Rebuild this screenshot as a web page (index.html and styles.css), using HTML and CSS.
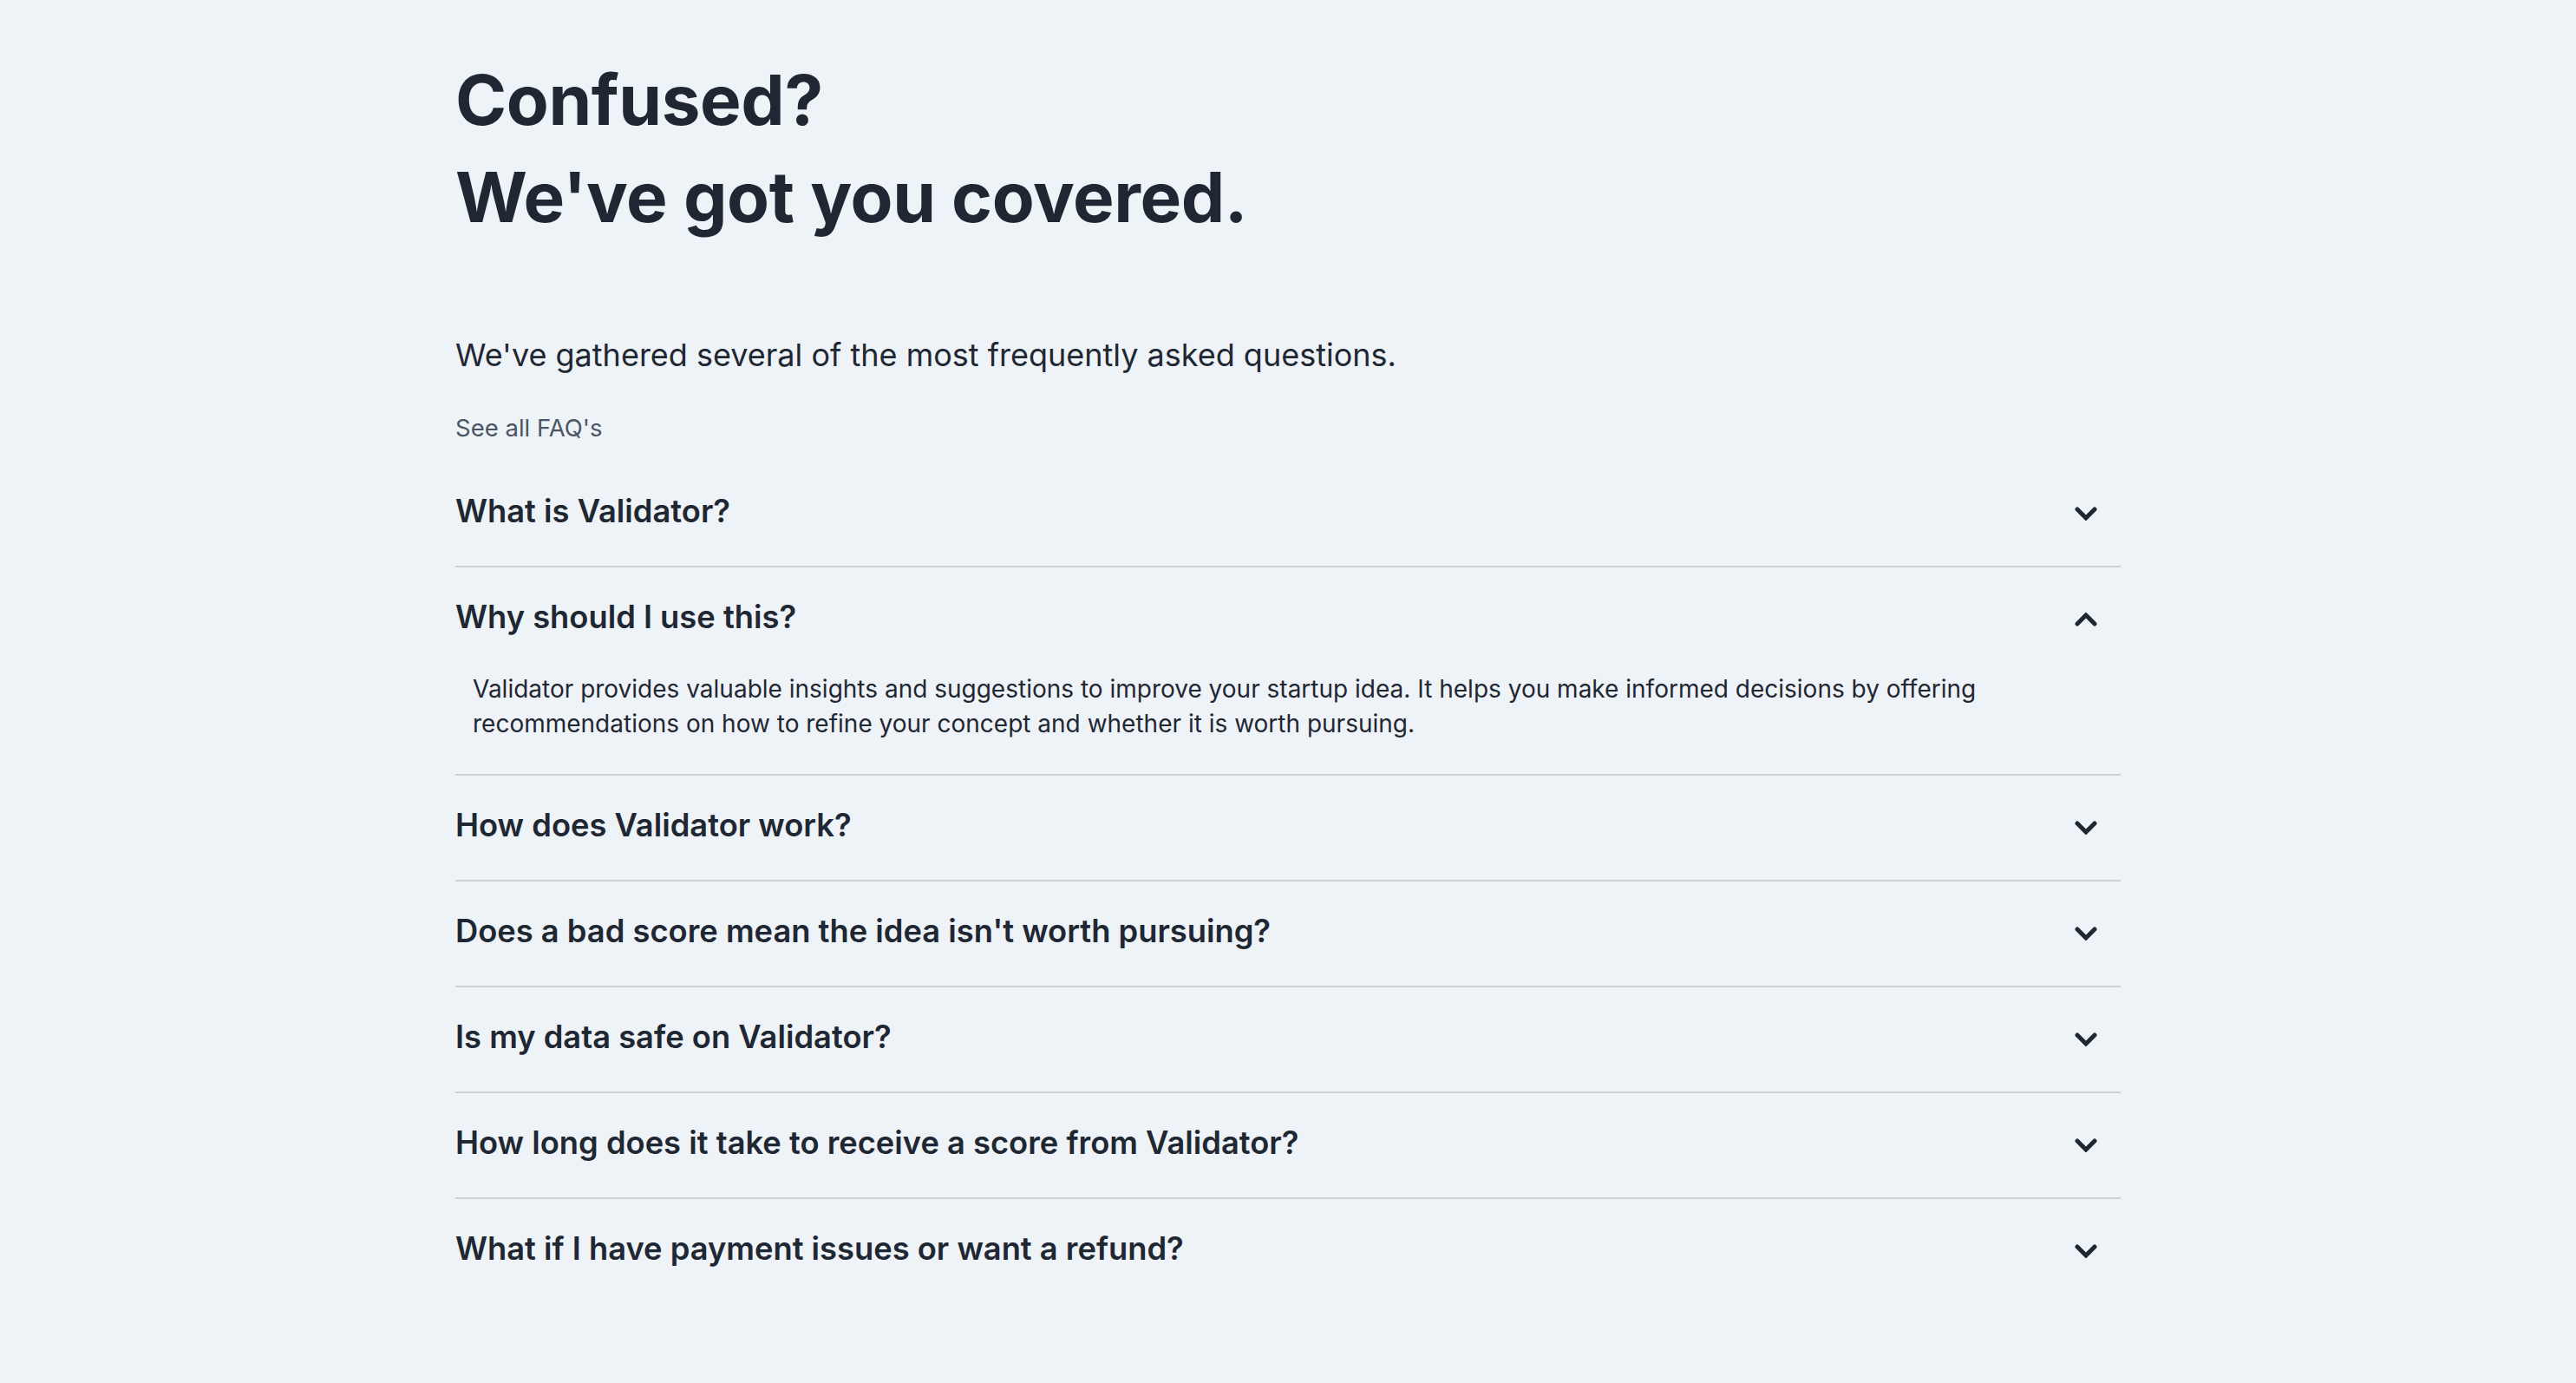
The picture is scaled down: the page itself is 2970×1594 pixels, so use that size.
FILE: index.html
```html
<!DOCTYPE html>
<html lang="en">
<head>
<meta charset="utf-8">
<title>FAQ</title>
<link rel="stylesheet" href="styles.css">
</head>
<body>
<section class="faq">
  <h1 class="title">Confused?<br>We've got you covered.</h1>
  <p class="lead">We've gathered several of the most frequently asked questions.</p>
  <a class="all-link" href="#">See all FAQ's</a>
  <div class="accordion">
    <div class="item">
      <button class="question"><span class="q-text">What is Validator?</span><svg class="chev" viewBox="0 0 26 16"><polyline points="3,3 13,13 23,3"/></svg></button>
    </div>
    <div class="item open">
      <button class="question"><span class="q-text">Why should I use this?</span><svg class="chev" viewBox="0 0 26 16"><polyline points="3,13 13,3 23,13"/></svg></button>
      <div class="answer">Validator provides valuable insights and suggestions to improve your startup idea. It helps you make informed decisions by offering recommendations on how to refine your concept and whether it is worth pursuing.</div>
    </div>
    <div class="item">
      <button class="question"><span class="q-text">How does Validator work?</span><svg class="chev" viewBox="0 0 26 16"><polyline points="3,3 13,13 23,3"/></svg></button>
    </div>
    <div class="item">
      <button class="question"><span class="q-text">Does a bad score mean the idea isn't worth pursuing?</span><svg class="chev" viewBox="0 0 26 16"><polyline points="3,3 13,13 23,3"/></svg></button>
    </div>
    <div class="item">
      <button class="question"><span class="q-text">Is my data safe on Validator?</span><svg class="chev" viewBox="0 0 26 16"><polyline points="3,3 13,13 23,3"/></svg></button>
    </div>
    <div class="item">
      <button class="question"><span class="q-text">How long does it take to receive a score from Validator?</span><svg class="chev" viewBox="0 0 26 16"><polyline points="3,3 13,13 23,3"/></svg></button>
    </div>
    <div class="item">
      <button class="question"><span class="q-text">What if I have payment issues or want a refund?</span><svg class="chev" viewBox="0 0 26 16"><polyline points="3,3 13,13 23,3"/></svg></button>
    </div>
  </div>
</section>
</body>
</html>
```
FILE: styles.css
```css
* { box-sizing: border-box; }
html, body { margin: 0; padding: 0; }
body {
  background: #eef3f7;
  color: #1f2733;
  font-family: Inter, "Noto Sans", sans-serif;
}
.faq {
  width: 1920px;
  margin: 0 auto;
  padding: 59px 0 80px;
}
.title {
  margin: 0;
  font-size: 80px;
  line-height: 112px;
  font-weight: 700;
  letter-spacing: -0.4px;
}
.lead {
  margin: 101px 0 0;
  font-size: 36px;
  line-height: 50px;
  font-weight: 400;
}
.all-link {
  display: block;
  margin-top: 39px;
  font-size: 27.5px;
  line-height: 40px;
  color: #4b5563;
  text-decoration: none;
}
.accordion {
  margin-top: 19px;
}
.item + .item {
  border-top: 2px solid #cdd2d7;
}
.question {
  display: flex;
  align-items: center;
  justify-content: space-between;
  width: 100%;
  height: 120px;
  padding: 0 27px 0 0;
  border: 0;
  background: none;
  font-family: inherit;
  color: inherit;
  text-align: left;
  cursor: pointer;
}
.q-text {
  font-size: 36.3px;
  line-height: 48px;
  font-weight: 600;
  padding-bottom: 6px;
}
.chev {
  width: 26px;
  height: 16px;
  fill: none;
  stroke: #1f2733;
  stroke-width: 5;
  stroke-linecap: round;
  stroke-linejoin: miter;
}
.answer {
  padding: 0 80px 38px 20px;
  font-size: 28px;
  line-height: 40px;
  color: #1f2733;
}
```
